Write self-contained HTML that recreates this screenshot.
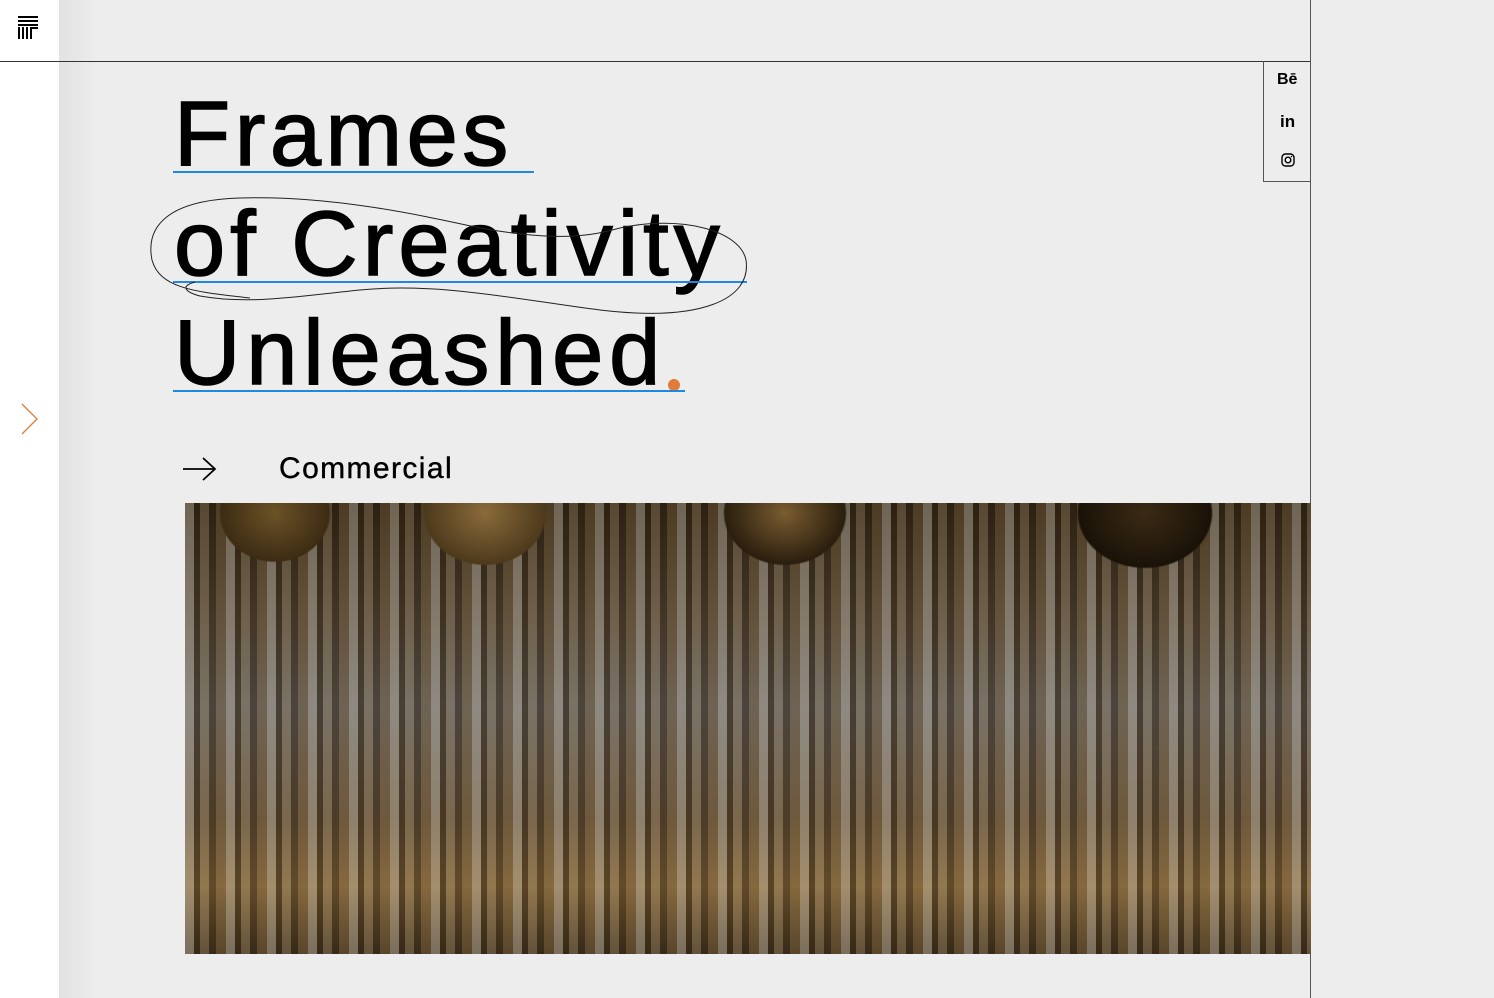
<!DOCTYPE html>
<html><head><meta charset="utf-8"><style>
html,body{margin:0;padding:0;width:1494px;height:998px;overflow:hidden;background:#ededed;font-family:"Liberation Sans",sans-serif;}
.left{position:absolute;left:0;top:0;width:59px;height:998px;background:#fff;}
.shade{position:absolute;left:59px;top:0;width:40px;height:998px;background:linear-gradient(90deg,#e2e2e2,#ededed);}
.hline{position:absolute;left:0;top:61px;width:1311px;height:1px;background:#333;}
.vline{position:absolute;left:1310px;top:0;width:1px;height:998px;background:#555;}
.social{position:absolute;left:1263px;top:61px;width:47px;height:120px;border-left:1px solid #555;border-bottom:1px solid #555;}
.t{position:absolute;left:174px;font-size:92px;color:#000;line-height:1;white-space:nowrap;-webkit-text-stroke:1.5px #000;}
.ul{position:absolute;height:2px;background:#1e88e5;left:173px;}
.img{position:absolute;left:185px;top:503px;width:1126px;height:451px;overflow:hidden;
background:
radial-gradient(ellipse 90px 80px at 90px 10px,#6b5226 0,#3d2c14 60%,transparent 62%),
radial-gradient(ellipse 100px 85px at 300px 10px,#8a6a3a 0,#4d3a1c 60%,transparent 62%),
radial-gradient(ellipse 100px 85px at 600px 10px,#7a5c30 0,#2a1e0e 60%,transparent 62%),
radial-gradient(ellipse 110px 90px at 960px 10px,#3a2a14 0,#1a1208 60%,transparent 62%),
repeating-linear-gradient(90deg,rgba(210,210,205,.35) 0 9px,rgba(30,22,12,.45) 9px 15px,rgba(170,160,140,.25) 15px 24px,rgba(20,15,10,.35) 24px 31px,rgba(120,100,70,.3) 31px 41px),
linear-gradient(180deg,#3a2a14 0%,#5a4a36 25%,#6a6258 45%,#6a5438 70%,#8a6a3a 85%,#4a3820 100%);}
</style></head><body>
<div class="left"></div><div class="shade"></div>
<div class="hline"></div><div class="vline"></div>
<svg style="position:absolute;left:18px;top:16px" width="20" height="24" viewBox="0 0 20 24"><g fill="#000"><rect x="0" y="0" width="20" height="2"/><rect x="0" y="4" width="20" height="2"/><rect x="0" y="8" width="20" height="2"/><rect x="0" y="11" width="2" height="12"/><rect x="4" y="11" width="2" height="12"/><rect x="8" y="11" width="2" height="12"/><rect x="12" y="11" width="8" height="2"/><rect x="12" y="11" width="2" height="12"/></g></svg>
<svg style="position:absolute;left:20px;top:403px" width="20" height="32" viewBox="0 0 20 32"><path d="M2 1 L17 16 L2 31" fill="none" stroke="#e07b39" stroke-width="1.3"/></svg>
<div class="social">
<div style="position:absolute;left:13px;top:10px;font-weight:bold;font-size:16px">Bē</div>
<div style="position:absolute;left:16px;top:51px;font-weight:bold;font-size:17px">in</div>
<svg style="position:absolute;left:17px;top:92px" width="14" height="14" viewBox="0 0 14 14"><rect x="1" y="1" width="12" height="12" rx="3.5" fill="none" stroke="#000" stroke-width="1.4"/><circle cx="7" cy="7" r="2.8" fill="none" stroke="#000" stroke-width="1.4"/><circle cx="10.5" cy="3.5" r=".8"/></svg>
</div>
<div class="t" style="top:88px;letter-spacing:4.5px">Frames</div>
<div class="t" style="top:198px;letter-spacing:5px">of Creativity</div>
<div class="t" style="top:307px;letter-spacing:5.8px">Unleashed</div>
<div style="position:absolute;left:668px;top:379px;width:12px;height:12px;border-radius:50%;background:#e07b39"></div>
<div class="ul" style="top:171px;width:361px"></div>
<div class="ul" style="top:281px;width:574px"></div>
<div class="ul" style="top:390px;width:512px"></div>
<svg style="position:absolute;left:140px;top:190px" width="620" height="135" viewBox="140 190 620 135" fill="none" stroke="#222" stroke-width="1"><path d="M250 298 C200 292 160 290 152 260 C145 225 170 200 240 198 C330 195 420 215 480 228 C560 242 590 236 620 228 C680 215 740 230 746 260 C752 300 700 322 600 310 C520 300 440 282 360 290 C300 296 250 305 200 296 C185 292 180 286 195 282"/></svg>
<svg style="position:absolute;left:182px;top:457px" width="36" height="24" viewBox="0 0 36 24"><path d="M1 12 H33 M21 1 L33 12 L21 23" fill="none" stroke="#000" stroke-width="1.8"/></svg>
<div style="position:absolute;left:279px;top:452px;font-size:30px;letter-spacing:1.4px;-webkit-text-stroke:.4px #000">Commercial</div>
<div class="img"></div>
</body></html>
